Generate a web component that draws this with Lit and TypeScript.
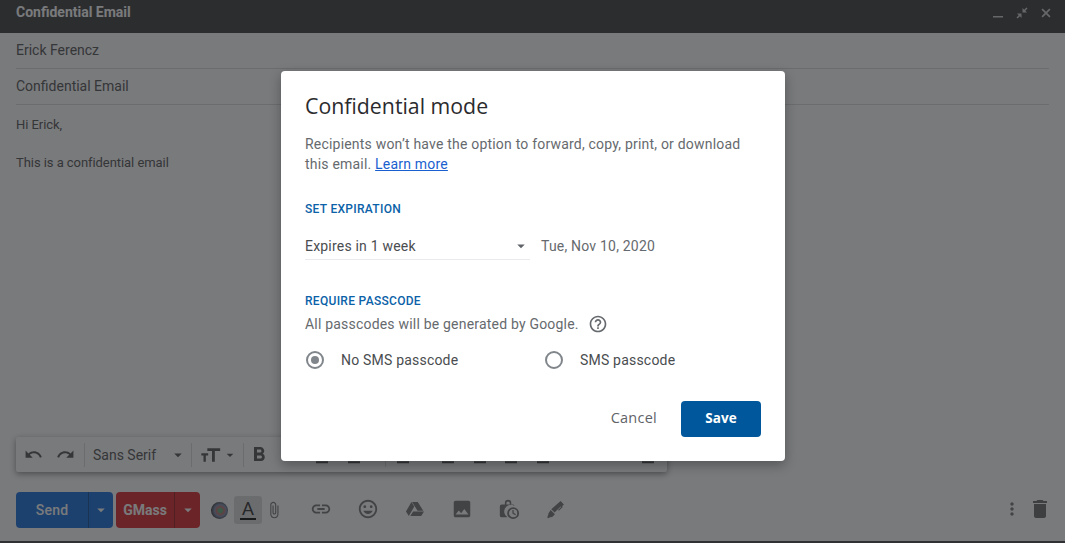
import { LitElement, html, css, svg } from "lit";
import { customElement } from "lit/decorators.js";

const P: Record<string, string> = {
  undo: "M12.5 8c-2.65 0-5.05.99-6.9 2.6L2 7v9h9l-3.62-3.62c1.39-1.16 3.16-1.88 5.12-1.88 3.54 0 6.55 2.31 7.6 5.5l2.37-.78C21.08 11.03 17.15 8 12.5 8z",
  redo: "M18.4 10.6C16.55 8.99 14.15 8 11.5 8c-4.65 0-8.58 3.03-9.96 7.22L3.9 16c1.05-3.19 4.05-5.5 7.6-5.5 1.95 0 3.73.72 5.12 1.88L13 16h9V7l-3.6 3.6z",
  caret: "M7 10l5 5 5-5z",
  size: "M23 4v3.2h-6.4V20h-3.4V7.2H7.6V4H23zM8.6 10v2.6H5.8V20H3v-7.4H.4V10h8.2z",
  bold: "M15.6 10.79c.97-.67 1.65-1.77 1.65-2.79 0-2.26-1.75-4-4-4H7v14h7.04c2.09 0 3.71-1.7 3.71-3.79 0-1.52-.86-2.82-2.15-3.42zM10 6.5h3c.83 0 1.5.67 1.5 1.5s-.67 1.5-1.5 1.5h-3v-3zm3.5 9H10v-3h3.5c.83 0 1.5.67 1.5 1.5s-.67 1.5-1.5 1.5z",
  lines: "M3 3h18v3H3zM3 9h18v3H3zM3 15h18v3H3zM3 20h18v3H3z",
  link: "M3.9 12c0-1.71 1.39-3.1 3.1-3.1h4V7H7c-2.76 0-5 2.24-5 5s2.24 5 5 5h4v-1.9H7c-1.71 0-3.1-1.39-3.1-3.1zM8 13h8v-2H8v2zm9-6h-4v1.9h4c1.71 0 3.1 1.39 3.1 3.1s-1.39 3.1-3.1 3.1h-4V17h4c2.76 0 5-2.24 5-5s-2.24-5-5-5z",
  emoji: "M11.99 2C6.47 2 2 6.48 2 12s4.47 10 9.99 10C17.52 22 22 17.52 22 12S17.52 2 11.99 2zM12 20c-4.42 0-8-3.58-8-8s3.58-8 8-8 8 3.58 8 8-3.58 8-8 8zm3.5-9c.83 0 1.5-.67 1.5-1.5S16.33 8 15.5 8 14 8.67 14 9.5s.67 1.5 1.5 1.5zm-7 0c.83 0 1.5-.67 1.5-1.5S9.33 8 8.5 8 7 8.67 7 9.5 7.67 11 8.5 11zm3.5 6.5c2.33 0 4.31-1.46 5.11-3.5H6.89c.8 2.04 2.78 3.5 5.11 3.5z",
  drive: "M7.71 3.5L1.15 15l3.42 5.5 6.56-11.5L7.71 3.5zM9.73 15L6.3 20.5h13.12L22.85 15H9.73zm12.13-1L15.3 3.5H8.44L15 14h6.86z",
  image: "M21 19V5c0-1.1-.9-2-2-2H5c-1.1 0-2 .9-2 2v14c0 1.1.9 2 2 2h14c1.1 0 2-.9 2-2zM8.5 13.5l2.5 3.01L14.5 12l4.5 6H5l3.5-4.5z",
  attach: "M16.5 6v11.5c0 2.21-1.79 4-4 4s-4-1.79-4-4V5c0-1.38 1.12-2.5 2.5-2.5s2.5 1.12 2.5 2.5v10.5c0 .55-.45 1-1 1s-1-.45-1-1V6H10v9.5c0 1.38 1.12 2.5 2.5 2.5s2.5-1.12 2.5-2.5V5c0-2.21-1.79-4-4-4S7 2.79 7 5v12.5c0 3.04 2.46 5.5 5.5 5.5s5.5-2.46 5.5-5.5V6h-1.5z",
  lockclock: "M7.5 7V5.5a3.5 3.5 0 0 1 7 0V7H16a2 2 0 0 1 2 1.6A7 7 0 0 0 10.2 21H4a2 2 0 0 1-2-2V9a2 2 0 0 1 2-2h3.5zM9.2 7h3.6V5.5a1.8 1.8 0 0 0-3.6 0V7zM16.5 10a6.5 6.5 0 1 1 0 13 6.5 6.5 0 0 1 0-13zm0 2a4.5 4.5 0 1 0 0 9 4.5 4.5 0 0 0 0-9zm-.8 1.2h1.4v3l2.5 1.5-.7 1.1-3.2-1.9v-3.7z",
  pen: "M17.5 2.5l4 4-2.2 2.2.8.8-4.6 4.6-1-1 3.6-3.6-.5-.5-7.3 7.3-4-4zM5.6 13.3l5.1 5.1-3.2 3.1-2.6.5-2.4 1-1-1 1-2.4.5-2.6z",
  more: "M12 8c1.1 0 2-.9 2-2s-.9-2-2-2-2 .9-2 2 .9 2 2 2zm0 2c-1.1 0-2 .9-2 2s.9 2 2 2 2-.9 2-2-.9-2-2-2zm0 6c-1.1 0-2 .9-2 2s.9 2 2 2 2-.9 2-2-.9-2-2-2z",
  trash: "M6 19c0 1.1.9 2 2 2h8c1.1 0 2-.9 2-2V7H6v12zM19 4h-3.5l-1-1h-5l-1 1H5v2h14V4z",
  help: "M11 18h2v-2h-2v2zm1-16C6.48 2 2 6.48 2 12s4.48 10 10 10 10-4.48 10-10S17.52 2 12 2zm0 18c-4.41 0-8-3.59-8-8s3.59-8 8-8 8 3.59 8 8-3.59 8-8 8zm0-14c-2.21 0-4 1.79-4 4h2c0-1.1.9-2 2-2s2 .9 2 2c0 2-3 1.75-3 5h2c0-2.25 3-2.5 3-5 0-2.21-1.79-4-4-4z",
  min: "M2 18h20v3H2z",
  shrink: "M13 2v9h9l-3.4-3.4L23 3.2 20.8 1l-4.4 4.4zM11 22v-9H2l3.4 3.4L1 20.8 3.2 23l4.4-4.4z",
  close: "M21 5.4L18.6 3 12 9.6 5.4 3 3 5.4 9.6 12 3 18.6 5.4 21l6.6-6.6 6.6 6.6 2.4-2.4-6.6-6.6z",
};

const icon = (name: string, cls = "") =>
  html`<svg class="ic ${cls}" viewBox="0 0 24 24" aria-hidden="true">${svg`<path d=${P[name]}></path>`}</svg>`;

@customElement("app-root")
export class AppRoot extends LitElement {
  static styles = css`
    :host { display: block; position: relative; width: 1065px; height: 543px; overflow: hidden; background: #fff; font-family: Roboto, "Liberation Sans", sans-serif; color: #555; }
    .ic { display: block; width: 16px; height: 16px; fill: currentColor; flex: none; }
    .compose { display: flex; flex-direction: column; height: 543px; }
    .head { flex: none; height: 33px; box-sizing: border-box; background: #404040; color: #fff; display: flex; padding: 4px 13px 0 16px; font-size: 14px; font-weight: 700; line-height: 16px; }
    .head .title { flex: 1; }
    .wins { display: flex; gap: 12px; padding-top: 3px; color: #d0d0d0; }
    .wins .ic { width: 12px; height: 12px; }
    .field { margin: 0 16px; height: 36px; flex: none; box-sizing: border-box; border-bottom: 1px solid #dcdcdc; font-size: 14px; line-height: 34px; }
    .msg { flex: 1; padding: 12px 16px 0; font-size: 13px; letter-spacing: -.06px; }
    .msg p { margin: 0 0 22px; line-height: 16px; }
    .tools { flex: none; box-sizing: border-box; margin-left: 16px; width: 651px; height: 35px; background: #fff; border-radius: 2px; box-shadow: 0 2px 6px rgba(0,0,0,.45); display: flex; align-items: center; padding-left: 8px; color: #555; font-size: 14px; }
    .tools .und { width: 19px; height: 19px; }
    .sep { width: 1px; height: 24px; background: #ddd; flex: none; }
    .tools .redo { margin-left: 13px; margin-right: 9px; }
    .tools .font { margin-left: 8px; width: 64px; color: #555; }
    .tools .c1 { margin-left: 12px; margin-right: 4px; width: 18px; height: 18px; }
    .tools .sizei { margin-left: 9px; width: 20px; height: 20px; }
    .tools .c2 { margin-left: 1px; margin-right: 5px; }
    .tools .b { margin-left: 3px; width: 24px; height: 24px; }
    .tools .l { margin-top: 3px; }
    .tools .l1 { margin-left: 43px; }
    .tools .l2 { margin-left: 16px; }
    .tools .sp { margin-left: 23px; }
    .tools .l3 { margin-left: 9px; }
    .tools .l4 { margin-left: 29px; }
    .tools .l6 { margin-left: 15px; }
    .tools .l8 { margin-left: 89px; }
    .bar { flex: none; height: 36px; margin-top: 20px; padding: 0 13px 0 16px; display: flex; align-items: center; color: #777; }
    .btn { height: 36px; display: flex; border-radius: 4px; color: #fff; font-size: 14px; font-weight: 500; align-items: center; overflow: hidden; }
    .send { width: 97px; background: #1a72dc; letter-spacing: .2px; }
    .gmass { width: 84px; margin-left: 3px; background: #dd2a2c; font-weight: 700; }
    .btn .lab { flex: none; text-align: center; height: 36px; line-height: 36px; }
    .send .lab { width: 72px; }
    .gmass .lab { width: 58px; }
    .btn .dd { flex: 1; height: 36px; border-left: 1px solid rgba(0,0,0,.3); display: flex; align-items: center; justify-content: center; }
    .btn .dd .ic { width: 18px; height: 18px; }
    .orb { margin-left: 11px; width: 17px; height: 17px; border-radius: 50%; background: radial-gradient(circle at 55% 50%, #60b080 0 14%, #c07070 30%, #8090b0 46%, #3c3c3c 74%, #555); flex: none; }
    .fmt { margin-left: 6px; width: 28px; height: 28px; background: #dcdcdc; border-radius: 3px; flex: none; display: flex; flex-direction: column; align-items: center; justify-content: center; color: #333; font-size: 19px; line-height: 16px; }
    .fmt i { display: block; width: 16px; height: 2px; background: #111; margin-top: 1px; }
    .clip { margin-left: 3px; width: 18px; height: 18px; }
    .act { width: 22px; height: 22px; margin-left: 25px; margin-top: -2px; }
    .a1 { margin-left: 27px; }
    .act.sm { width: 20px; height: 20px; margin-left: 26px; margin-right: 1px; margin-top: -2px; }
    .spacer { flex: 1; }
    .b7 { width: 20px; height: 20px; margin-right: 6px; margin-top: -2px; color: #777; }
    .b8 { width: 24px; height: 24px; color: #6c6c6c; margin-top: -2px; }
    .strip { flex: none; height: 2px; margin-top: 13px; background: #4a4a4a; }
    .scrim { position: absolute; inset: 0; background: rgba(32,33,36,.6); }
    .dialog { position: absolute; left: 281px; top: 71px; width: 504px; height: 390px; box-sizing: border-box; padding: 21px 24px 24px; background: #fff; border-radius: 4px; box-shadow: 0 4px 12px rgba(0,0,0,.3); color: #666a6e; font-size: 14px; letter-spacing: .2px; display: flex; flex-direction: column; }
    h1 { margin: 0; font-family: "Open Sans", sans-serif; font-weight: 400; font-size: 21.3px; line-height: 28px; letter-spacing: 0; color: #2b2b2e; }
    .desc { margin: 14px 0 0; line-height: 20px; }
    .desc a { color: #1a5fd0; text-decoration: underline; }
    .sect { margin: 0; font-size: 12px; font-weight: 500; line-height: 16px; color: #0b62a8; letter-spacing: .3px; }
    .s1 { margin-top: 27px; }
    .s2 { margin-top: 33px; }
    .exp { display: flex; align-items: center; margin-top: 16px; }
    .select { width: 225px; height: 27px; box-sizing: border-box; border-bottom: 1px solid #e8eaed; display: flex; justify-content: space-between; align-items: center; color: #4a4d50; }
    .select .ic { width: 18px; height: 18px; color: #5f6368; }
    .date { margin-left: 11px; padding-bottom: 1px; }
    .note { margin-top: 5px; display: flex; align-items: center; line-height: 20px; }
    .note .ic { width: 20px; height: 20px; margin-left: 9px; }
    .radios { display: flex; margin-top: 16px; color: #4a4d50; line-height: 20px; }
    .opt { display: flex; align-items: center; width: 240px; flex: none; }
    .dot { width: 18px; height: 18px; box-sizing: border-box; border: 2px solid #80868b; border-radius: 50%; display: flex; align-items: center; justify-content: center; margin-left: 1px; margin-right: 17px; flex: none; }
    .opt.off .dot { margin-left: 0; }
    .opt.on .dot::after { content: ""; width: 8px; height: 8px; border-radius: 50%; background: #80868b; }
    .actions { margin-top: auto; display: flex; justify-content: flex-end; align-items: center; }
    .cancel { font-family: "Open Sans", sans-serif; font-size: 14.5px; line-height: 18px; margin-top: -2px; letter-spacing: .25px; color: #5f6368; margin-right: 24px; font-weight: 500; }
    .save { width: 80px; height: 36px; border-radius: 4px; background: #01579b; color: #fff; text-align: center; line-height: 35px; font-family: "Open Sans", sans-serif; font-size: 13.5px; font-weight: 700; letter-spacing: .1px; }
  `;

  render() {
    return html`
      <div class="compose">
        <div class="head">
          <div class="title">Confidential Email</div>
          <div class="wins">${icon("min")}${icon("shrink")}${icon("close")}</div>
        </div>
        <div class="field">Erick Ferencz</div>
        <div class="field">Confidential Email</div>
        <div class="msg">
          <p>Hi Erick,</p>
          <p>This is a confidential email</p>
        </div>
        <div class="tools">
          ${icon("undo", "und")}${icon("redo", "und redo")}
          <div class="sep"></div>
          <div class="font">Sans Serif</div>
          ${icon("caret", "c1")}
          <div class="sep"></div>
          ${icon("size", "sizei")}${icon("caret", "c2")}
          <div class="sep"></div>
          ${icon("bold", "b")}
          ${icon("lines", "l l1")}${icon("lines", "l l2")}
          <div class="sep sp"></div>
          ${icon("lines", "l l3")}${icon("lines", "l l4")}${icon("lines", "l l2")}${icon("lines", "l l6")}${icon("lines", "l l2")}
          ${icon("lines", "l l8")}
        </div>
        <div class="bar">
          <div class="btn send"><span class="lab">Send</span><span class="dd">${icon("caret")}</span></div>
          <div class="btn gmass"><span class="lab">GMass</span><span class="dd">${icon("caret")}</span></div>
          <div class="orb"></div>
          <div class="fmt">A<i></i></div>
          ${icon("attach", "clip")}
          ${icon("link", "act a1")}${icon("emoji", "act")}${icon("drive", "act sm")}${icon("image", "act")}${icon("lockclock", "act")}${icon("pen", "act sm")}
          <div class="spacer"></div>
          ${icon("more", "b7")}${icon("trash", "b8")}
        </div>
        <div class="strip"></div>
      </div>
      <div class="scrim"></div>
      <div class="dialog">
        <h1>Confidential mode</h1>
        <p class="desc">Recipients won’t have the option to forward, copy, print, or download this email. <a>Learn more</a></p>
        <div class="sect s1">SET EXPIRATION</div>
        <div class="exp">
          <div class="select"><span>Expires in 1 week</span>${icon("caret")}</div>
          <div class="date">Tue, Nov 10, 2020</div>
        </div>
        <div class="sect s2">REQUIRE PASSCODE</div>
        <div class="note"><span>All passcodes will be generated by Google.</span>${icon("help")}</div>
        <div class="radios">
          <div class="opt on"><span class="dot"></span>No SMS passcode</div>
          <div class="opt off"><span class="dot"></span>SMS passcode</div>
        </div>
        <div class="actions"><span class="cancel">Cancel</span><div class="save">Save</div></div>
      </div>
    `;
  }
}
